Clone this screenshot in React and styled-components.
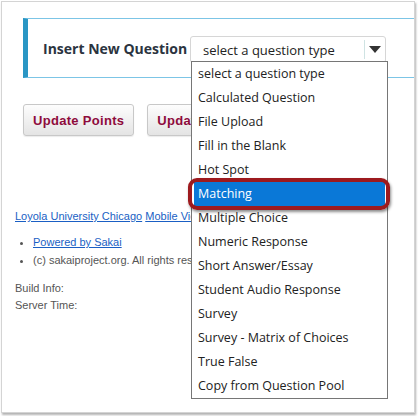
import styled, { createGlobalStyle } from 'styled-components'

const Global = createGlobalStyle`
  html, body { margin: 0; padding: 0; background: #fff; }
  body { width: 418px; height: 416px; overflow: hidden; }
`

const options = [
  'select a question type',
  'Calculated Question',
  'File Upload',
  'Fill in the Blank',
  'Hot Spot',
  'Matching',
  'Multiple Choice',
  'Numeric Response',
  'Short Answer/Essay',
  'Student Audio Response',
  'Survey',
  'Survey - Matrix of Choices',
  'True False',
  'Copy from Question Pool',
]

export default function App() {
  return (
    <>
      <Global />
      <Frame>
        <Header>
          <Label>Insert New Question</Label>
          <SelectBox>
            <SelectText>select a question type</SelectText>
            <ArrowCell>
              <svg width="12" height="7" viewBox="0 0 12 7">
                <path d="M0 0 L12 0 L6 7 Z" fill="#333" />
              </svg>
            </ArrowCell>
          </SelectBox>
          <Menu>
            {options.map((o) => (
              <Option key={o} $active={o === 'Matching'}>
                {o}
                {o === 'Matching' && <Ring />}
              </Option>
            ))}
          </Menu>
        </Header>

        <Buttons>
          <Button>Update Points</Button>
          <Button>Update Scores</Button>
        </Buttons>

        <Footer>
          <LinkRow>
            <A href="#">Loyola University Chicago</A> <A href="#">Mobile View</A>
          </LinkRow>
          <List>
            <li><A href="#">Powered by Sakai</A></li>
            <li>(c) sakaiproject.org. All rights reserved.</li>
          </List>
          <Info $first>Build Info:</Info>
          <Info>Server Time:</Info>
        </Footer>
      </Frame>
    </>
  )
}

const Frame = styled.div`
  position: relative;
  margin: 1px 0 0 1px;
  width: 412px;
  height: 410px;
  border: 1px solid #d4d4d4;
  box-shadow: 1px 2px 2px rgba(0, 0, 0, 0.3);
  overflow: hidden;
  background: #fff;
`

const Header = styled.div`
  position: relative;
  margin: 16px 0 0 21px;
  height: 58px;
  border-top: 1px solid #7cc5e6;
  border-bottom: 1px solid #7cc5e6;
  border-left: 5px solid #2a96c4;
  display: flex;
  align-items: center;
  padding-left: 15px;
`

const Label = styled.div`
  font-family: 'Open Sans', sans-serif;
  font-weight: bold;
  font-size: 14px;
  color: #2b3440;
  width: 147px;
  white-space: nowrap;
`

const SelectBox = styled.div`
  display: flex;
  align-items: stretch;
  width: 194px;
  height: 25px;
  border: 1px solid #d6d6d6;
  border-radius: 3px;
  margin-top: 3px;
  background: #fff;
`

const SelectText = styled.div`
  flex: 1;
  display: flex;
  align-items: center;
  padding-left: 12px;
  font-family: 'Open Sans', sans-serif;
  font-size: 13px;
  color: #222;
  border-right: 1px solid #cfe3e3;
  margin: 3px 0;
`

const ArrowCell = styled.div`
  width: 20px;
  display: flex;
  align-items: center;
  justify-content: center;
`

const Menu = styled.ul`
  position: absolute;
  left: 163px;
  top: 42px;
  width: 195px;
  margin: 0;
  padding: 0;
  list-style: none;
  border: 1px solid #767676;
  background: #fff;
  z-index: 2;
`

const Option = styled.li`
  position: relative;
  height: 24px;
  line-height: 24px;
  margin: 0 2px;
  padding-left: 4px;
  font-family: 'Open Sans', sans-serif;
  font-size: 12.5px;
  color: ${(p) => (p.$active ? '#fff' : '#222')};
  background: ${(p) => (p.$active ? '#0a78d7' : 'transparent')};
  white-space: nowrap;
`

const Ring = styled.span`
  position: absolute;
  left: -6px;
  right: -5px;
  top: -4px;
  bottom: -4px;
  border: 4px solid #9d1a1e;
  border-radius: 9px;
  box-shadow: 1px 2px 3px rgba(0, 0, 0, 0.45);
`

const Buttons = styled.div`
  display: flex;
  gap: 13px;
  margin: 26px 0 0 21px;
`

const Button = styled.button`
  height: 32px;
  padding: 0 9px;
  border: 1px solid #c8c8c8;
  border-radius: 3px;
  background: linear-gradient(#fdfdfd, #e4e4e4);
  box-shadow: 0 1px 1px rgba(0, 0, 0, 0.08);
  font-family: 'Liberation Sans', Arial, sans-serif;
  font-weight: bold;
  font-size: 13px;
  letter-spacing: 0.3px;
  color: #8e0b3c;
  white-space: nowrap;
`

const Footer = styled.div`
  margin: 74px 0 0 13px;
  font-family: 'Liberation Sans', Arial, sans-serif;
  font-size: 11px;
  color: #555;
`

const LinkRow = styled.div`
  white-space: nowrap;
`

const A = styled.a`
  color: #1a5fc4;
  text-decoration: underline;
`

const List = styled.ul`
  margin: 11px 0 0 0;
  padding-left: 18px;
  line-height: 18px;
  white-space: nowrap;
`

const Info = styled.div`
  line-height: 17px;
  margin-top: ${(p) => (p.$first ? '11px' : '0')};
`
